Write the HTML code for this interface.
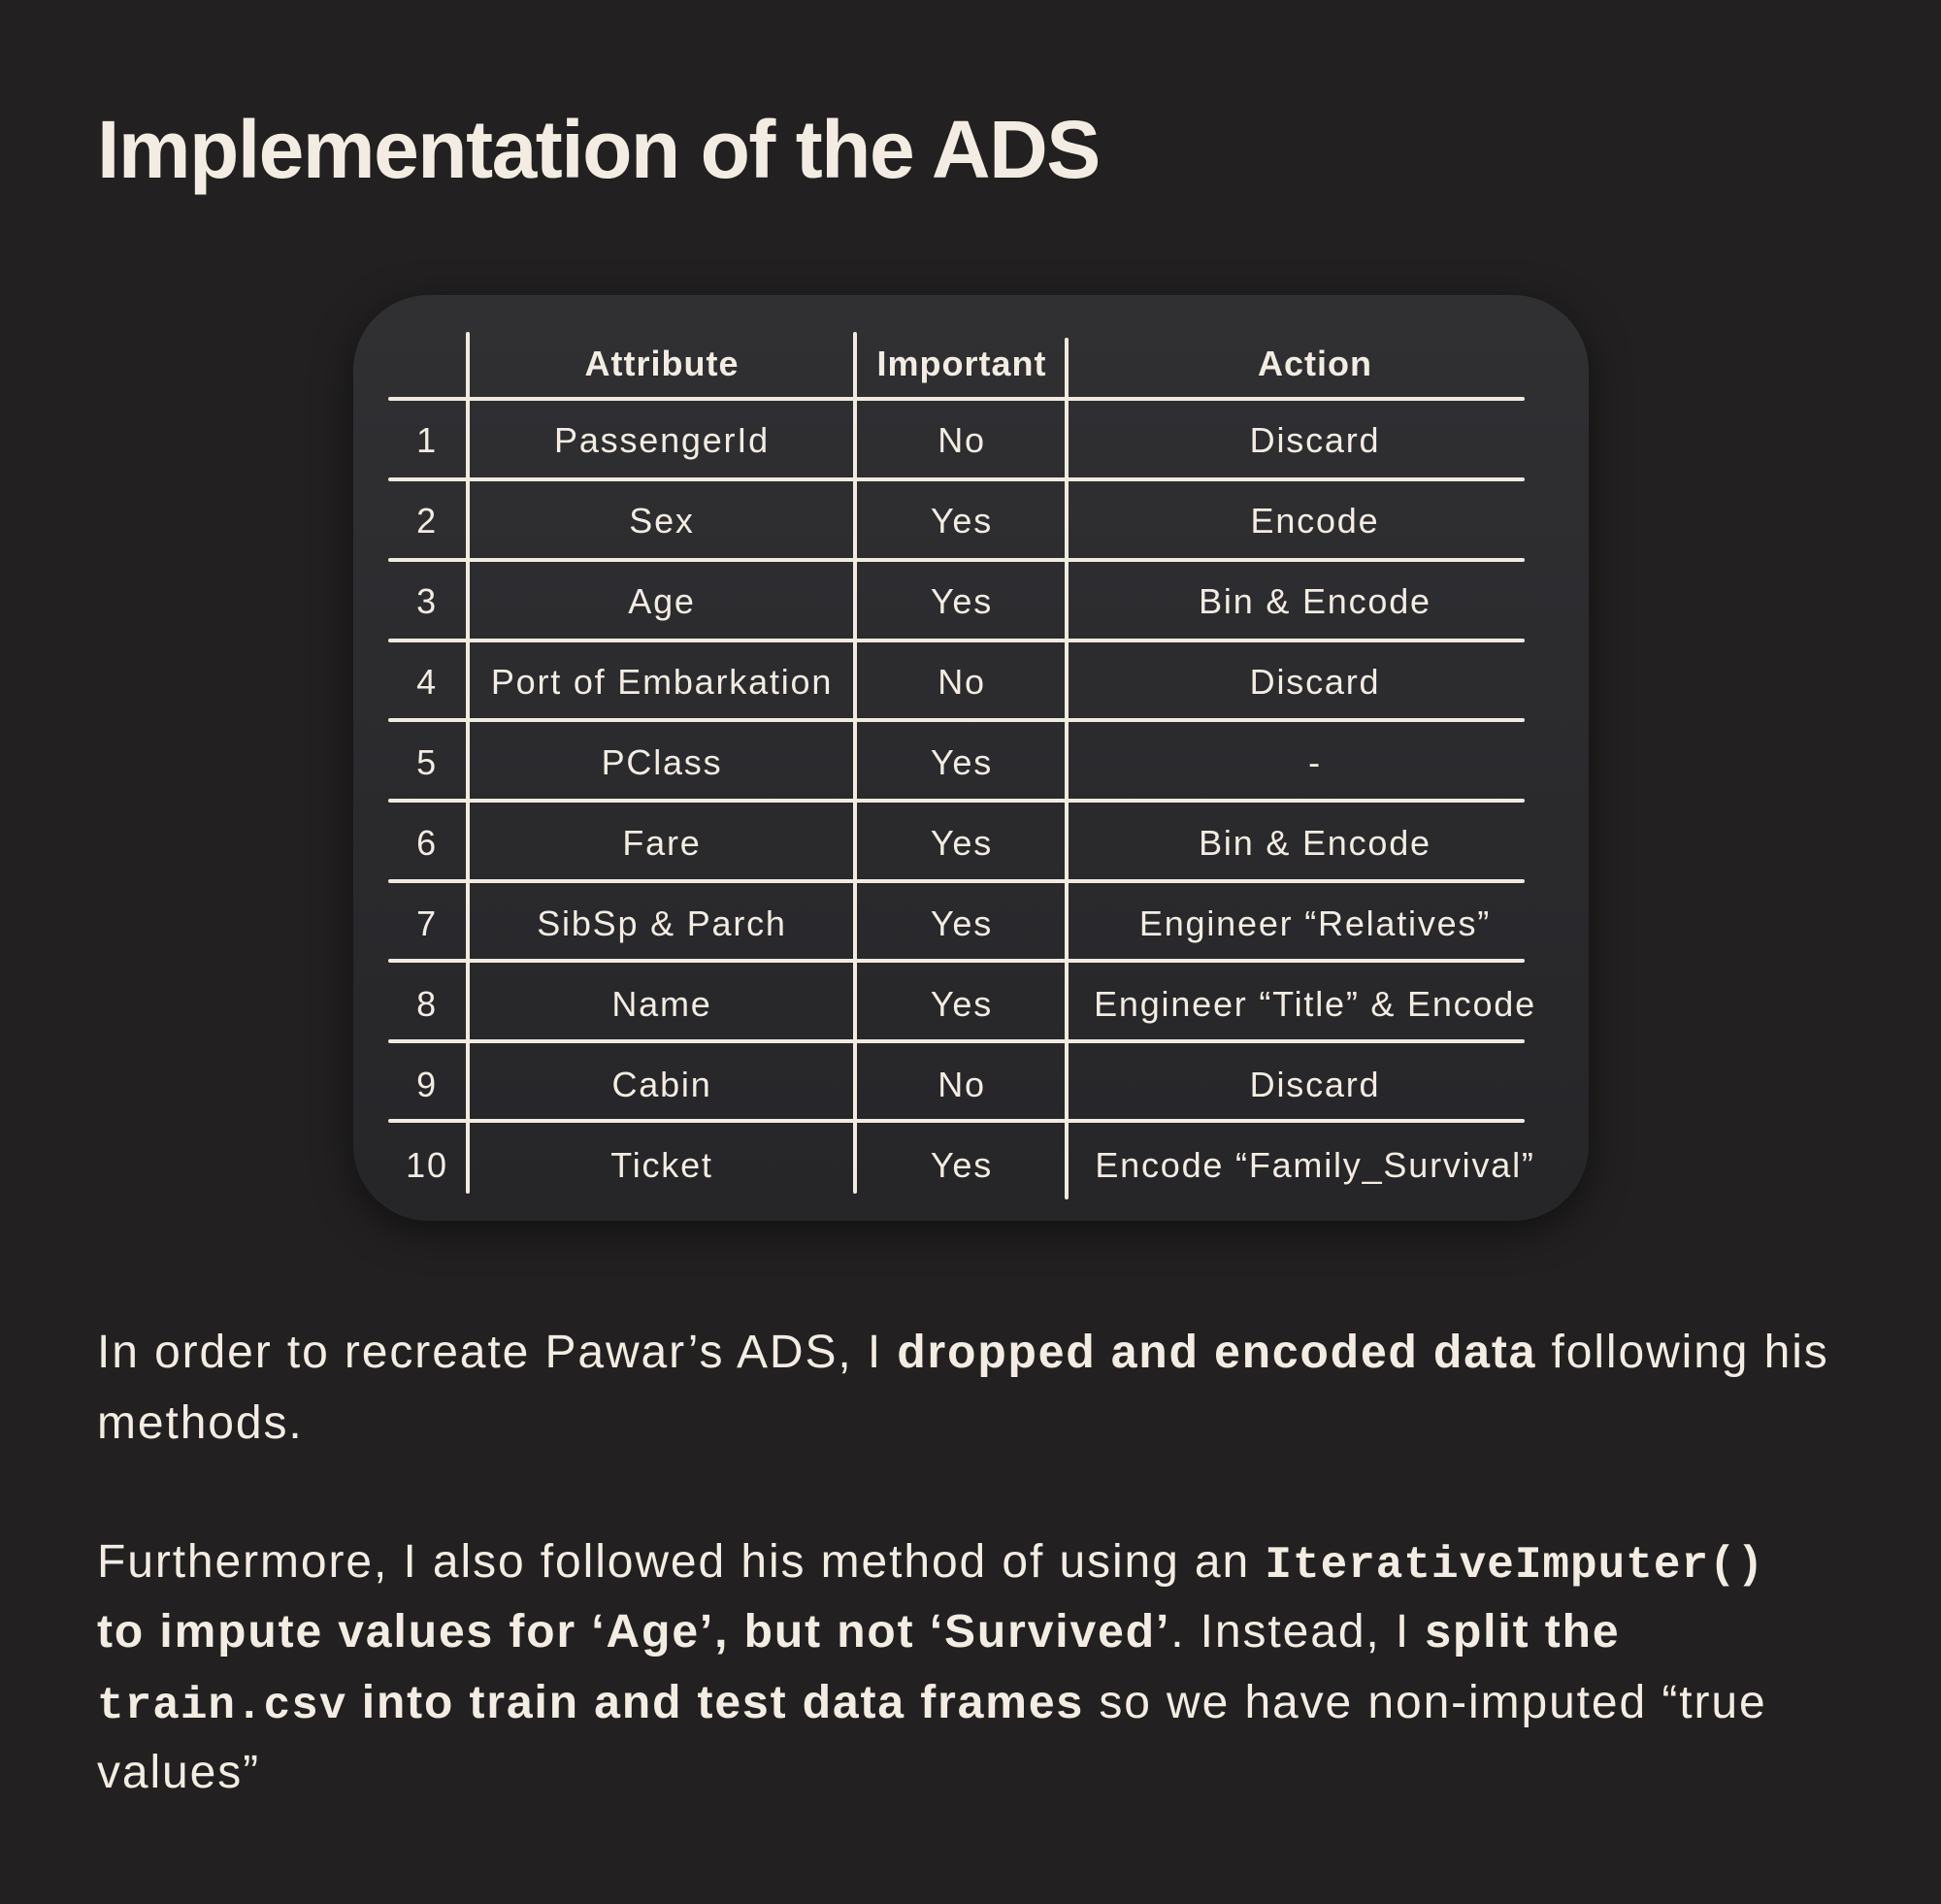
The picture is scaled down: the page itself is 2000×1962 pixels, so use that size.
<!DOCTYPE html>
<html><head><meta charset="utf-8"><style>
html,body{margin:0;padding:0}
body{width:2000px;height:1962px;background:#222021;position:relative;overflow:hidden;font-family:"Liberation Sans",sans-serif;color:#f3ece2}
.title{position:absolute;left:100px;top:104px;font-size:84px;font-weight:bold;letter-spacing:-1.5px;line-height:100px;white-space:nowrap}
.card{position:absolute;left:364px;top:304px;width:1273px;height:954px;border-radius:78px;background:linear-gradient(#303033,#262528);box-shadow:0 10px 40px rgba(0,0,0,.5)}
.h{position:absolute;left:400px;width:1171px;height:4px;background:#f1eadf;border-radius:2px}
.v{position:absolute;top:342px;width:4px;height:888px;background:#f1eadf;border-radius:2px}
.c{position:absolute;width:600px;margin-left:-300px;text-align:center;font-size:36px;letter-spacing:1.8px;line-height:40px;white-space:nowrap}
.b{font-weight:bold;letter-spacing:1px}
.p{position:absolute;left:100px;font-size:48px;letter-spacing:1.9px;line-height:50px;white-space:nowrap}
code{font-family:"Liberation Mono",monospace;font-weight:bold;font-size:46px;letter-spacing:1px}
</style></head><body>
<div class="title">Implementation of the ADS</div>
<div class="card"></div>
<div class="v" style="left:480px"></div>
<div class="v" style="left:879px"></div>
<div class="v" style="left:1097px;top:348px"></div>
<div class="h" style="top:409px"></div>
<div class="h" style="top:492px"></div>
<div class="h" style="top:575px"></div>
<div class="h" style="top:658px"></div>
<div class="h" style="top:740px"></div>
<div class="h" style="top:823px"></div>
<div class="h" style="top:906px"></div>
<div class="h" style="top:988px"></div>
<div class="h" style="top:1071px"></div>
<div class="h" style="top:1153px"></div>

<div class="c b" style="left:682px;top:355px">Attribute</div>
<div class="c b" style="left:991px;top:355px">Important</div>
<div class="c b" style="left:1355px;top:355px">Action</div>

<div class="c" style="left:440px;top:434px">1</div><div class="c" style="left:682px;top:434px">PassengerId</div><div class="c" style="left:991px;top:434px">No</div><div class="c" style="left:1355px;top:434px">Discard</div>
<div class="c" style="left:440px;top:517px">2</div><div class="c" style="left:682px;top:517px">Sex</div><div class="c" style="left:991px;top:517px">Yes</div><div class="c" style="left:1355px;top:517px">Encode</div>
<div class="c" style="left:440px;top:600px">3</div><div class="c" style="left:682px;top:600px">Age</div><div class="c" style="left:991px;top:600px">Yes</div><div class="c" style="left:1355px;top:600px">Bin &amp; Encode</div>
<div class="c" style="left:440px;top:683px">4</div><div class="c" style="left:682px;top:683px">Port of Embarkation</div><div class="c" style="left:991px;top:683px">No</div><div class="c" style="left:1355px;top:683px">Discard</div>
<div class="c" style="left:440px;top:766px">5</div><div class="c" style="left:682px;top:766px">PClass</div><div class="c" style="left:991px;top:766px">Yes</div><div class="c" style="left:1355px;top:766px">-</div>
<div class="c" style="left:440px;top:849px">6</div><div class="c" style="left:682px;top:849px">Fare</div><div class="c" style="left:991px;top:849px">Yes</div><div class="c" style="left:1355px;top:849px">Bin &amp; Encode</div>
<div class="c" style="left:440px;top:932px">7</div><div class="c" style="left:682px;top:932px">SibSp &amp; Parch</div><div class="c" style="left:991px;top:932px">Yes</div><div class="c" style="left:1355px;top:932px">Engineer “Relatives”</div>
<div class="c" style="left:440px;top:1015px">8</div><div class="c" style="left:682px;top:1015px">Name</div><div class="c" style="left:991px;top:1015px">Yes</div><div class="c" style="left:1355px;top:1015px">Engineer “Title” &amp; Encode</div>
<div class="c" style="left:440px;top:1098px">9</div><div class="c" style="left:682px;top:1098px">Cabin</div><div class="c" style="left:991px;top:1098px">No</div><div class="c" style="left:1355px;top:1098px">Discard</div>
<div class="c" style="left:440px;top:1181px">10</div><div class="c" style="left:682px;top:1181px">Ticket</div><div class="c" style="left:991px;top:1181px">Yes</div><div class="c" style="left:1355px;top:1181px">Encode “Family_Survival”</div>

<div class="p" style="top:1369px">In order to recreate Pawar’s ADS, I <b>dropped and encoded data</b> following his</div>
<div class="p" style="top:1442px">methods.</div>
<div class="p" style="top:1585px">Furthermore, I also followed his method of using an <code>IterativeImputer()</code></div>
<div class="p" style="top:1657px"><b>to impute values for ‘Age’, but not ‘Survived’</b>. Instead, I <b>split the</b></div>
<div class="p" style="top:1730px"><code>train.csv</code> <b>into train and test data frames</b> so we have non-imputed “true</div>
<div class="p" style="top:1802px">values”</div>
</body></html>
